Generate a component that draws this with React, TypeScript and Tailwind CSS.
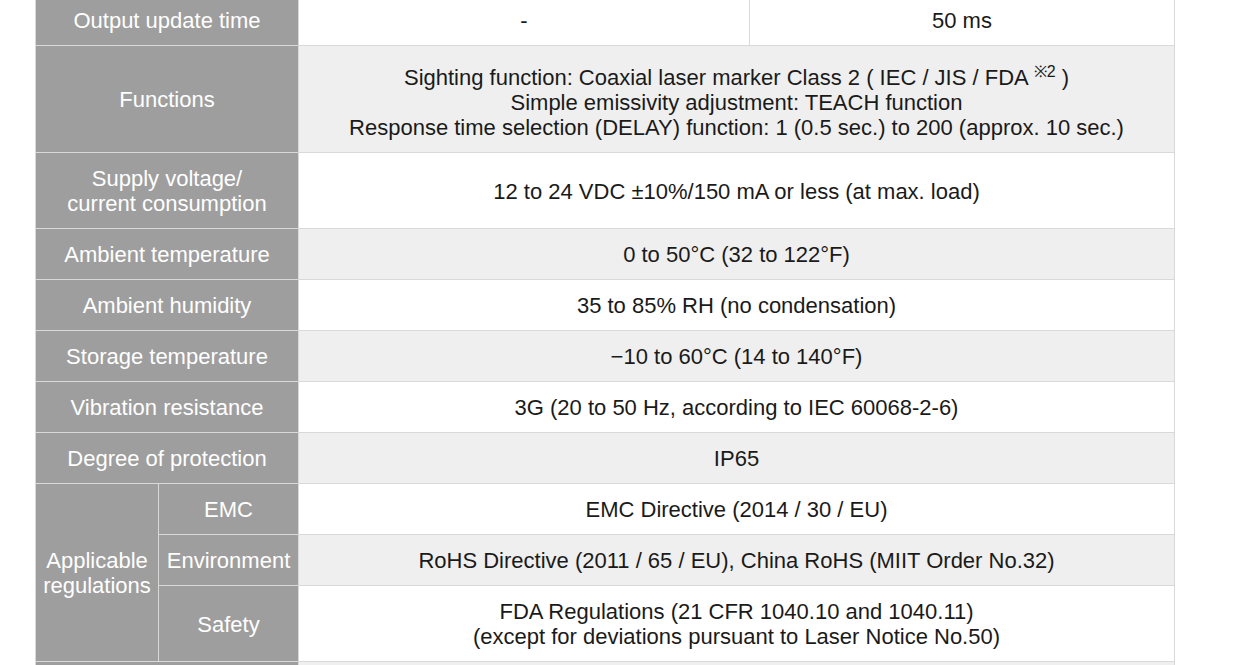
import React from 'react';

type Row = {
  label: React.ReactNode;
  value: React.ReactNode;
  shaded: boolean;
};

const th = 'bg-[#9e9e9e] text-white font-normal text-center align-middle border border-[#d9d9d9] px-1 pt-[13px] pb-3';
const td = 'text-[#1a1a1a] text-center align-middle border border-[#d9d9d9] px-2 pt-[13px] pb-3';

const rows: Row[] = [
  {
    label: (
      <>
        Supply voltage/
        <br />
        current consumption
      </>
    ),
    value: '12 to 24 VDC ±10%/150 mA or less (at max. load)',
    shaded: false,
  },
  { label: 'Ambient temperature', value: '0 to 50°C (32 to 122°F)', shaded: true },
  { label: 'Ambient humidity', value: '35 to 85% RH (no condensation)', shaded: false },
  { label: 'Storage temperature', value: '\u221210 to 60°C (14 to 140°F)', shaded: true },
  { label: 'Vibration resistance', value: '3G (20 to 50 Hz, according to IEC 60068-2-6)', shaded: false },
  { label: 'Degree of protection', value: 'IP65', shaded: true },
];

const App = () => {
  return (
    <div className="min-h-screen bg-white overflow-hidden">
      <div className="ml-[35px] -mt-[6px] w-[1140px]">
        <table
          className="w-full border-collapse table-fixed text-[22px] leading-[25px]"
          style={{ fontFamily: '"Liberation Sans", Arial, sans-serif' }}
        >
          <colgroup>
            <col className="w-[123px]" />
            <col className="w-[140px]" />
            <col className="w-[451px]" />
            <col />
          </colgroup>
          <tbody>
            <tr className="bg-white">
              <th colSpan={2} className={th}>Output update time</th>
              <td className={td}>-</td>
              <td className={td}>50 ms</td>
            </tr>
            <tr className="bg-[#efefef]">
              <th colSpan={2} className={th}>Functions</th>
              <td colSpan={2} className="text-[#1a1a1a] text-center align-middle border border-[#d9d9d9] px-2 pt-[18px] pb-[12px]">
                Sighting function: Coaxial laser marker Class 2 ( IEC / JIS / FDA{' '}
                <span className="align-super text-[16px] leading-[16px]">※2</span> )
                <br />
                Simple emissivity adjustment: TEACH function
                <br />
                Response time selection (DELAY) function: 1 (0.5 sec.) to 200 (approx. 10 sec.)
              </td>
            </tr>
            {rows.map((row, i) => (
              <tr key={i} className={row.shaded ? 'bg-[#efefef]' : 'bg-white'}>
                <th colSpan={2} className={th}>{row.label}</th>
                <td colSpan={2} className={td}>{row.value}</td>
              </tr>
            ))}
            <tr className="bg-white">
              <th rowSpan={3} className={th}>
                Applicable
                <br />
                regulations
              </th>
              <th className={th}>EMC</th>
              <td colSpan={2} className={td}>EMC Directive (2014 / 30 / EU)</td>
            </tr>
            <tr className="bg-[#efefef]">
              <th className={th}>Environment</th>
              <td colSpan={2} className={td}>
                RoHS Directive (2011 / 65 / EU), China RoHS (MIIT Order No.32)
              </td>
            </tr>
            <tr className="bg-white">
              <th className={th}>Safety</th>
              <td colSpan={2} className={td}>
                FDA Regulations (21 CFR 1040.10 and 1040.11)
                <br />
                (except for deviations pursuant to Laser Notice No.50)
              </td>
            </tr>
            <tr className="bg-[#efefef]">
              <th colSpan={2} className={th}>&nbsp;</th>
              <td colSpan={2} className={td}>&nbsp;</td>
            </tr>
          </tbody>
        </table>
      </div>
    </div>
  );
};

export default App;
